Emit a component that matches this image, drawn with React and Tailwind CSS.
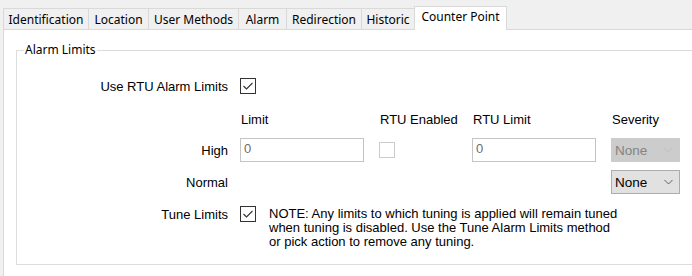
import React from "react";

const tabs = [
  { label: "Identification", w: "w-[85px]" },
  { label: "Location", w: "w-[60px]" },
  { label: "User Methods", w: "w-[90px]" },
  { label: "Alarm", w: "w-[48px]" },
  { label: "Redirection", w: "w-[75px]" },
  { label: "Historic", w: "w-[53px]" },
];

const Check = ({ checked, disabled }) => (
  <div
    className={
      "w-[16px] h-[16px] border bg-white flex items-center justify-center " +
      (disabled ? "border-[#cccccc]" : "border-[#333333]")
    }
  >
    {checked && (
      <svg width="14" height="14" viewBox="0 0 14 14">
        <path d="M2.5 7 L5.5 10 L11.5 4" fill="none" stroke="#333" strokeWidth="1.1" />
      </svg>
    )}
  </div>
);

const Combo = ({ disabled }) => (
  <div
    className={
      "w-[69px] h-[24px] border flex items-center justify-between pl-[3px] pr-[6px] text-[13.5px] " +
      (disabled
        ? "bg-[#cccccc] border-[#cccccc] text-[#838383]"
        : "bg-[#e1e1e1] border-[#adadad] text-black")
    }
  >
    <span>None</span>
    <svg width="9" height="6" viewBox="0 0 9 6">
      <path d="M0.5 1 L4.5 5 L8.5 1" fill="none" stroke={disabled ? "#bfbfbf" : "#606060"} strokeWidth="1" />
    </svg>
  </div>
);

const TextBox = () => (
  <div className="w-[124px] h-[24px] border border-[#c4c4c4] bg-white pl-[3px] pt-[2px] text-[#6d6d6d] leading-[16px]">
    0
  </div>
);

export default function App() {
  return (
    <div className="w-[692px] h-[276px] bg-[#f0f0f0] overflow-hidden font-['Liberation_Sans',Arial,sans-serif] text-[13px] leading-[15px] text-black">
      {/* tab strip */}
      <div className="flex items-end h-[29px] pl-[3px] font-['Noto_Sans',sans-serif] text-[12px]">
        {tabs.map((t) => (
          <div
            key={t.label}
            className={t.w + " h-[21px] border-l border-t border-[#d9d9d9] flex items-center justify-center"}
          >
            {t.label}
          </div>
        ))}
        <div className="w-[93px] h-[24px] relative z-10 -mb-[1px] bg-white border-l border-r border-t border-[#d9d9d9] flex items-start justify-center pt-[2px]">
          Counter Point
        </div>
      </div>

      {/* page */}
      <div className="ml-[3px] h-[247px] bg-white border-l border-t border-[#d9d9d9] pt-[20px] pl-[12px]">
        <div className="w-[700px] h-[215px] border border-[#dcdcdc]">
          <div className="-mt-[8px] ml-[7px] w-fit px-[1px] bg-white h-[14px] leading-[14px] font-['Noto_Sans',sans-serif] text-[12px]">
            Alarm Limits
          </div>

          <div className="flex items-center h-[16px] mt-[21px]">
            <div className="w-[223px] pr-[12px] text-right">Use RTU Alarm Limits</div>
            <Check checked />
          </div>

          <div className="flex h-[15px] mt-[18px]">
            <div className="w-[223px]" />
            <div className="w-[139px] pl-[1px]">Limit</div>
            <div className="w-[93px] pl-[1px]">RTU Enabled</div>
            <div className="w-[139px] pl-[1px]">RTU Limit</div>
            <div className="w-[69px] pl-[1px]">Severity</div>
          </div>

          <div className="flex items-center h-[24px] mt-[11px]">
            <div className="w-[223px] pr-[12px] text-right">High</div>
            <div className="w-[139px]">
              <TextBox />
            </div>
            <div className="w-[93px]">
              <Check disabled />
            </div>
            <div className="w-[139px]">
              <TextBox />
            </div>
            <Combo disabled />
          </div>

          <div className="flex items-center h-[24px] mt-[8px]">
            <div className="w-[223px] pr-[12px] text-right">Normal</div>
            <div className="w-[371px]" />
            <Combo />
          </div>

          <div className="flex items-start mt-[12px]">
            <div className="w-[223px] pr-[12px] text-right h-[16px] flex items-center justify-end">Tune Limits</div>
            <Check checked />
            <p className="ml-[13px] w-[352px] leading-[14px] pt-[1px]">
              NOTE: Any limits to which tuning is applied will remain tuned when tuning is disabled. Use the Tune Alarm Limits method or pick action to remove any tuning.
            </p>
          </div>
        </div>
      </div>
    </div>
  );
}
